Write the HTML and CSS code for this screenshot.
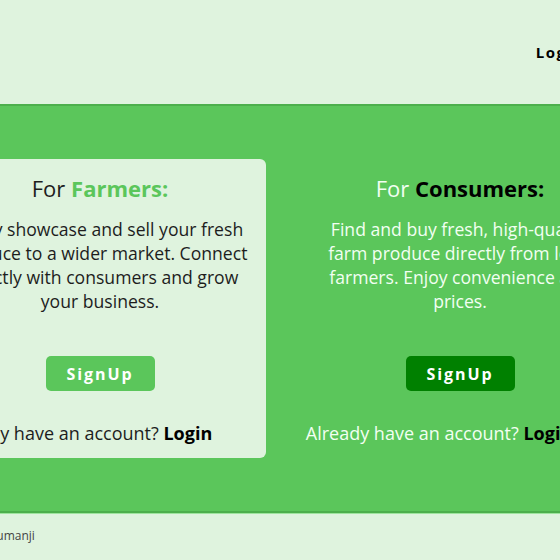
FILE: index.html
```html
<!DOCTYPE html>
<html lang="en">
<head>
<meta charset="utf-8">
<title>Farm Market</title>
<link rel="stylesheet" href="styles.css">
</head>
<body>
<header class="header">
  <div class="inner header-inner">
    <a class="header-login" href="#">Login</a>
  </div>
</header>
<main class="hero">
  <div class="inner columns">
    <section class="panel panel-card">
      <h2 class="panel-title">For <strong class="accent">Farmers:</strong></h2>
      <p class="panel-text">Easily showcase and sell your fresh produce to a wider market. Connect directly with consumers and grow your business.</p>
      <a class="btn btn-light" href="#">SignUp</a>
      <p class="panel-login">Already have an account? <strong>Login</strong></p>
    </section>
    <section class="panel panel-plain">
      <h2 class="panel-title">For <strong class="dark">Consumers:</strong></h2>
      <p class="panel-text">Find and buy fresh, high-quality<br>farm produce directly from local farmers. Enjoy convenience and prices.</p>
      <a class="btn btn-dark" href="#">SignUp</a>
      <p class="panel-login">Already have an account? <strong class="dark">Login</strong></p>
    </section>
  </div>
</main>
<footer class="footer">
  <div class="inner footer-inner">© Jumanji</div>
</footer>
</body>
</html>
```
FILE: styles.css
```css
html, body {
  margin: 0;
  padding: 0;
}
body {
  background: #dff3de;
  font-family: "Open Sans", "Liberation Sans", sans-serif;
  color: #1d1d1d;
  overflow: hidden;
}
.header, .hero, .footer {
  display: flex;
  justify-content: center;
}
.inner {
  flex: 0 0 692px;
  width: 692px;
  box-sizing: border-box;
}
.header {
  height: 104px;
}
.header-inner {
  display: flex;
  justify-content: flex-end;
  align-items: center;
  padding-right: 42px;
}
.header-login {
  font-weight: 700;
  font-size: 15px;
  color: #000;
  text-decoration: none;
  letter-spacing: 1.5px;
}
.hero {
  background: #5bc65b;
  border-top: 2px solid #4caf4c;
  border-bottom: 2px solid #4caf4c;
  box-shadow: 0 1px 0 #9ee49e;
  padding: 53px 0;
}
.columns {
  display: grid;
  grid-template-columns: 331px 331px;
  gap: 29px;
  padding: 0 0.5px;
}
.panel {
  display: flex;
  flex-direction: column;
  align-items: center;
  text-align: center;
  padding: 15px 10px 13px;
  border-radius: 6px;
}
.panel-card {
  background: #dff3de;
}
.panel-plain {
  color: #f2fff2;
}
.panel-title {
  margin: 0;
  font-size: 22px;
  line-height: 28px;
  font-weight: 400;
}
.panel-title strong {
  font-weight: 700;
}
.accent {
  color: #5bc65b;
}
.dark {
  color: #000;
}
.panel-text {
  margin: 15px 0 0;
  width: 310px;
  font-size: 17.6px;
  line-height: 24px;
}
.btn {
  margin-top: 43px;
  width: 109px;
  height: 35px;
  border-radius: 5px;
  display: flex;
  align-items: center;
  justify-content: center;
  color: #fff;
  font-weight: 700;
  font-size: 16px;
  letter-spacing: 1.9px;
  text-decoration: none;
}
.btn-light {
  background: #5bc65b;
}
.btn-dark {
  background: #008000;
}
.panel-login {
  margin: 30px 0 0;
  padding-right: 42px;
  font-size: 18px;
  line-height: 24px;
  white-space: nowrap;
}
.panel-login strong {
  font-weight: 700;
}
.panel-card .panel-login strong {
  color: #000;
}
.footer {
  height: 48px;
}
.footer-inner {
  display: flex;
  align-items: center;
  padding: 0 0 3px 46px;
  font-size: 12px;
  color: #444;
}
```
